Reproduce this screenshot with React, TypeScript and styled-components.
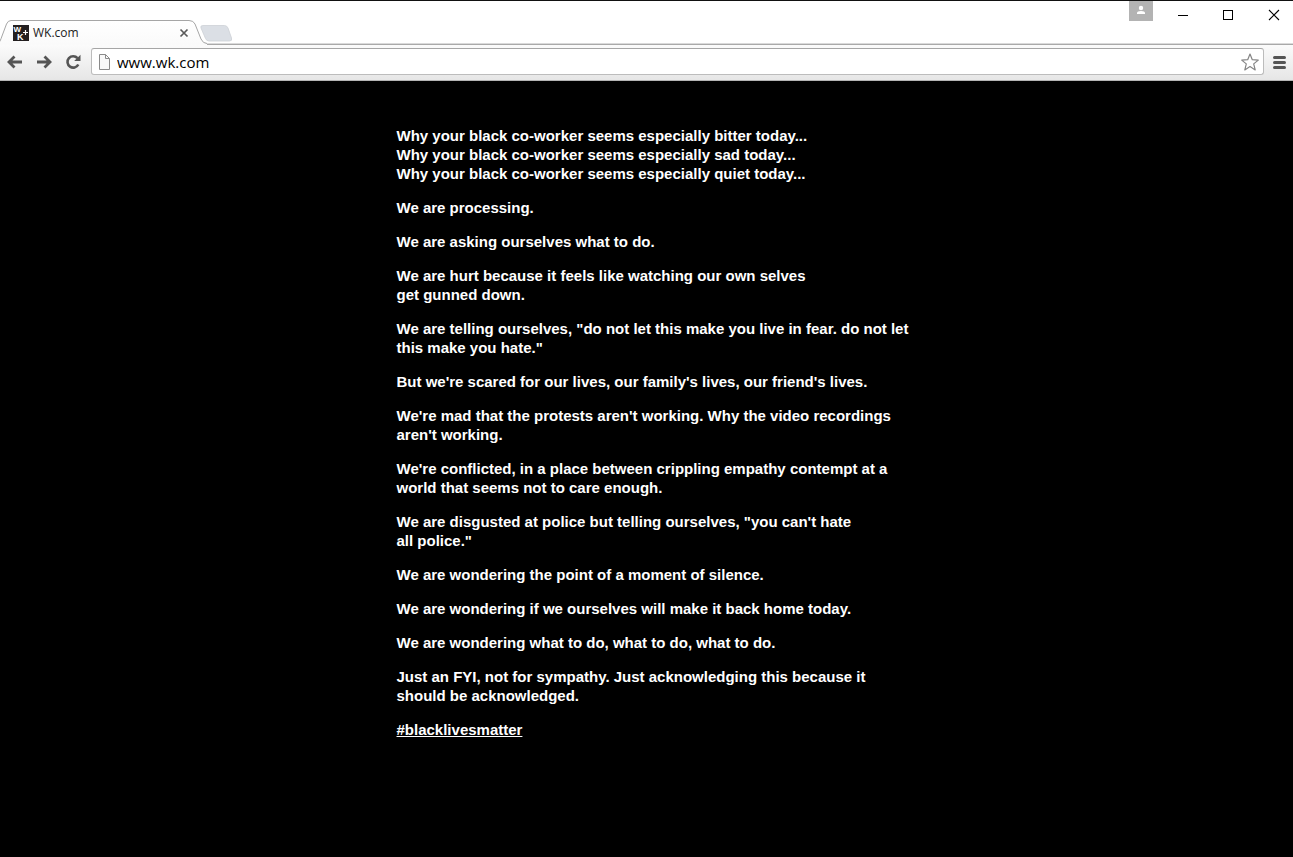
import React from "react";
import styled, { createGlobalStyle } from "styled-components";

const Global = createGlobalStyle`
  *, *::before, *::after { box-sizing: border-box; }
  html, body { margin: 0; background: #000; }
  svg { display: block; }
`;

const Shell = styled.div`
  display: flex;
  flex-direction: column;
  min-height: 100vh;
  background: #000;
`;

const TitleBar = styled.header`
  display: flex;
  align-items: flex-start;
  justify-content: space-between;
  height: 44px;
  border-top: 1px solid #111;
  background: #fff;
`;

const TabStrip = styled.div`
  display: flex;
  align-items: flex-end;
  height: 43px;
  flex: 1;
  box-shadow: inset 0 -1px 0 #dadada;
`;

const Tab = styled.div`
  position: relative;
  display: flex;
  align-items: center;
  width: 200px;
  height: 24px;
  padding: 2px 11px 0 13px;
`;

const TabOutline = styled.svg`
  position: absolute;
  left: 0;
  top: 0;
  overflow: visible;
`;

const TabFace = styled.div`
  position: relative;
  display: flex;
  align-items: center;
  flex: 1;
  gap: 4px;
`;

const TabTitle = styled.span`
  flex: 1;
  font: 12px/16px "Open Sans", "Noto Sans", sans-serif;
  color: #222;
`;

const IconButton = styled.button<{ $w?: number; $h?: number }>`
  display: flex;
  align-items: center;
  justify-content: center;
  flex: none;
  width: ${(p) => p.$w ?? 16}px;
  height: ${(p) => p.$h ?? 16}px;
  padding: 0;
  border: 0;
  background: none;
`;

const NewTab = styled(IconButton)`
  height: 24px;
`;

const WindowControls = styled.div`
  display: flex;
  align-items: flex-start;
  gap: 23px;
  height: 43px;
  padding-right: 13px;
  box-shadow: inset 0 -1px 0 #dadada;
`;

const UserBadge = styled(IconButton)`
  background: #b3b3b3;
`;

const ControlGroup = styled.div`
  display: flex;
  gap: 34px;
  padding-top: 8px;
`;

const Toolbar = styled.nav`
  display: flex;
  align-items: center;
  height: 37px;
  padding: 0 6px 2px;
  border-top: 1px solid #a9a9a9;
  border-bottom: 1px solid #b4b4b4;
  background: linear-gradient(#fbfbfb, #e6e6e6);
`;

const NavButtons = styled.div`
  display: flex;
  gap: 13px;
  padding-left: 1px;
  margin-right: 10px;
`;

const AddressBar = styled.label`
  display: flex;
  align-items: center;
  flex: 1;
  gap: 6px;
  height: 27px;
  margin-right: 8px;
  padding: 0 4px 0 6px;
  border: 1px solid #bcbcbc;
  border-top-color: #a6a6a6;
  border-radius: 3px;
  background: #fff;
`;

const AddressInput = styled.input`
  flex: 1;
  min-width: 0;
  height: 22px;
  padding: 0;
  border: 0;
  outline: 0;
  background: none;
  font: 15px/22px "Open Sans", "Noto Sans", sans-serif;
  color: #000;
`;

const Page = styled.main`
  flex: 1;
  padding: 45px 24px;
  background: #000;
  color: #fff;
`;

const Statement = styled.article`
  max-width: 500px;
  margin: 0 auto;
  font: bold 15px/19px "Liberation Sans", Arial, sans-serif;

  @media (min-width: 600px) {
    white-space: nowrap;
  }
`;

const Paragraph = styled.p`
  margin: 0 0 15px;
`;

const Hashtag = styled.a`
  color: #fff;
  text-decoration: underline;
`;

const paragraphs: string[][] = [
  [
    "Why your black co-worker seems especially bitter today...",
    "Why your black co-worker seems especially sad today...",
    "Why your black co-worker seems especially quiet today...",
  ],
  ["We are processing."],
  ["We are asking ourselves what to do."],
  ["We are hurt because it feels like watching our own selves", "get gunned down."],
  ['We are telling ourselves, "do not let this make you live in fear. do not let', 'this make you hate."'],
  ["But we're scared for our lives, our family's lives, our friend's lives."],
  ["We're mad that the protests aren't working. Why the video recordings", "aren't working."],
  ["We're conflicted, in a place between crippling empathy contempt at a", "world that seems not to care enough."],
  ['We are disgusted at police but telling ourselves, "you can\'t hate', 'all police."'],
  ["We are wondering the point of a moment of silence."],
  ["We are wondering if we ourselves will make it back home today."],
  ["We are wondering what to do, what to do, what to do."],
  ["Just an FYI, not for sympathy. Just acknowledging this because it", "should be acknowledged."],
];

const Favicon = () => (
  <svg width="16" height="16" viewBox="0 0 16 16" aria-hidden="true">
    <rect width="16" height="16" fill="#231f20" />
    <g fill="#fff" fontFamily="Liberation Sans, Arial, sans-serif" fontWeight="bold">
      <text x="0.5" y="7" fontSize="8">W</text>
      <text x="4" y="15" fontSize="9">K</text>
    </g>
    <path d="M10 7.500h5M12.500 5v5" stroke="#fff" strokeWidth="1.200" />
  </svg>
);

export default function App() {
  return (
    <Shell>
      <Global />
      <TitleBar>
        <TabStrip>
          <Tab>
            <TabOutline width="208" height="24" viewBox="0 0 208 24" aria-hidden="true">
              <defs>
                <linearGradient id="tabFill" x1="0" y1="0" x2="0" y2="1">
                  <stop offset="0" stopColor="#fff" />
                  <stop offset="1" stopColor="#fafafa" />
                </linearGradient>
              </defs>
              <path d="M-4 25C0 23 .5 20 2 16L6.500 4Q8 .5 11 .5H189Q193.500 .5 195 4L201 19Q203 23.500 207 23.500V25Z" fill="url(#tabFill)" />
              <path d="M-3 24C0 22.500 .5 20 2 16L6.500 4Q8 .5 11 .5H189Q193.500 .5 195 4L201 19Q203 23.500 207 23.500" fill="none" stroke="#a6a6a6" />
            </TabOutline>
            <TabFace>
              <Favicon />
              <TabTitle>WK.com</TabTitle>
              <IconButton $w={10} aria-label="Close tab">
                <svg width="10" height="10" viewBox="0 0 10 10">
                  <path d="M1.500 1.500l7 7M8.500 1.500l-7 7" stroke="#5a5a5a" strokeWidth="1.700" />
                </svg>
              </IconButton>
            </TabFace>
          </Tab>
          <NewTab $w={33} aria-label="New tab">
            <svg width="33" height="24" viewBox="0 0 33 24">
              <path d="M3 5.500H24.500Q27 5.500 28 8L31.500 18Q32.500 21 29.500 21H9Q6.500 21 5.500 18.500L1 8Q0 5.500 3 5.500Z" fill="#dbdfe5" stroke="#cdd1d6" strokeWidth=".8" />
            </svg>
          </NewTab>
        </TabStrip>
        <WindowControls>
          <UserBadge $w={24} $h={20} aria-label="Profile">
            <svg width="24" height="20" viewBox="0 0 24 20">
              <circle cx="12" cy="7" r="2.200" fill="#fff" />
              <path d="M8 13V12Q8 10 12 10T16 12V13Z" fill="#fff" />
            </svg>
          </UserBadge>
          <ControlGroup>
            <IconButton $w={12} $h={12} aria-label="Minimize">
              <svg width="12" height="12"><path d="M2 6.500H12" stroke="#000" /></svg>
            </IconButton>
            <IconButton $w={12} $h={12} aria-label="Maximize">
              <svg width="12" height="12"><rect x="1.500" y="1.500" width="9" height="9" fill="none" stroke="#000" /></svg>
            </IconButton>
            <IconButton $w={12} $h={12} aria-label="Close">
              <svg width="12" height="12"><path d="M1 1l10 10M11 1L1 11" stroke="#000" strokeWidth="1.100" /></svg>
            </IconButton>
          </ControlGroup>
        </WindowControls>
      </TitleBar>

      <Toolbar>
        <NavButtons>
          <IconButton aria-label="Back">
            <svg width="16" height="16" viewBox="0 0 16 16">
              <path d="M15 8H3M7.500 2.500L2 8l5.500 5.500" fill="none" stroke="#555" strokeWidth="2.800" />
            </svg>
          </IconButton>
          <IconButton aria-label="Forward">
            <svg width="16" height="16" viewBox="0 0 16 16">
              <path d="M1 8H13M8.500 2.500L14 8l-5.500 5.500" fill="none" stroke="#555" strokeWidth="2.800" />
            </svg>
          </IconButton>
          <IconButton aria-label="Reload">
            <svg width="16" height="16" viewBox="0 0 16 16">
              <path d="M12.500 4.200A5.700 5.700 0 1 0 13.300 10.500" fill="none" stroke="#555" strokeWidth="2.600" />
              <path d="M15.500 .8V7H9.200Z" fill="#555" />
            </svg>
          </IconButton>
        </NavButtons>
        <AddressBar>
          <svg width="13" height="16" viewBox="0 0 13 16" aria-hidden="true">
            <path d="M1.500 .5H7.500L11.500 4.500V15.500H1.500Z" fill="#f8f8f8" stroke="#8a8a8a" />
            <path d="M7.500 .5V4.500H11.500" fill="none" stroke="#8a8a8a" />
          </svg>
          <AddressInput aria-label="Address" defaultValue="www.wk.com" />
          <IconButton $w={18} $h={18} aria-label="Bookmark this page">
            <svg width="18" height="18" viewBox="0 0 18 18">
              <path d="M9 1L11.300 6.700L17.300 7.100L12.700 10.900L14.200 16.900L9 13.600L3.800 16.900L5.300 10.900L.7 7.100L6.700 6.700Z" fill="#fff" stroke="#858585" strokeWidth="1.200" strokeLinejoin="round" />
            </svg>
          </IconButton>
        </AddressBar>
        <IconButton $w={15} aria-label="Menu">
          <svg width="15" height="16" viewBox="0 0 15 16">
            <path d="M2.500 3.500H12.500M2.500 8.500H12.500M2.500 13.500H12.500" stroke="#555" strokeWidth="3" strokeLinecap="round" />
          </svg>
        </IconButton>
      </Toolbar>

      <Page>
        <Statement>
          {paragraphs.map((lines) => (
            <Paragraph key={lines[0]}>
              {lines.map((line, i) => (
                <React.Fragment key={line}>
                  {i > 0 && <br />}
                  {line}
                </React.Fragment>
              ))}
            </Paragraph>
          ))}
          <Paragraph>
            <Hashtag href="#blacklivesmatter">#blacklivesmatter</Hashtag>
          </Paragraph>
        </Statement>
      </Page>
    </Shell>
  );
}
